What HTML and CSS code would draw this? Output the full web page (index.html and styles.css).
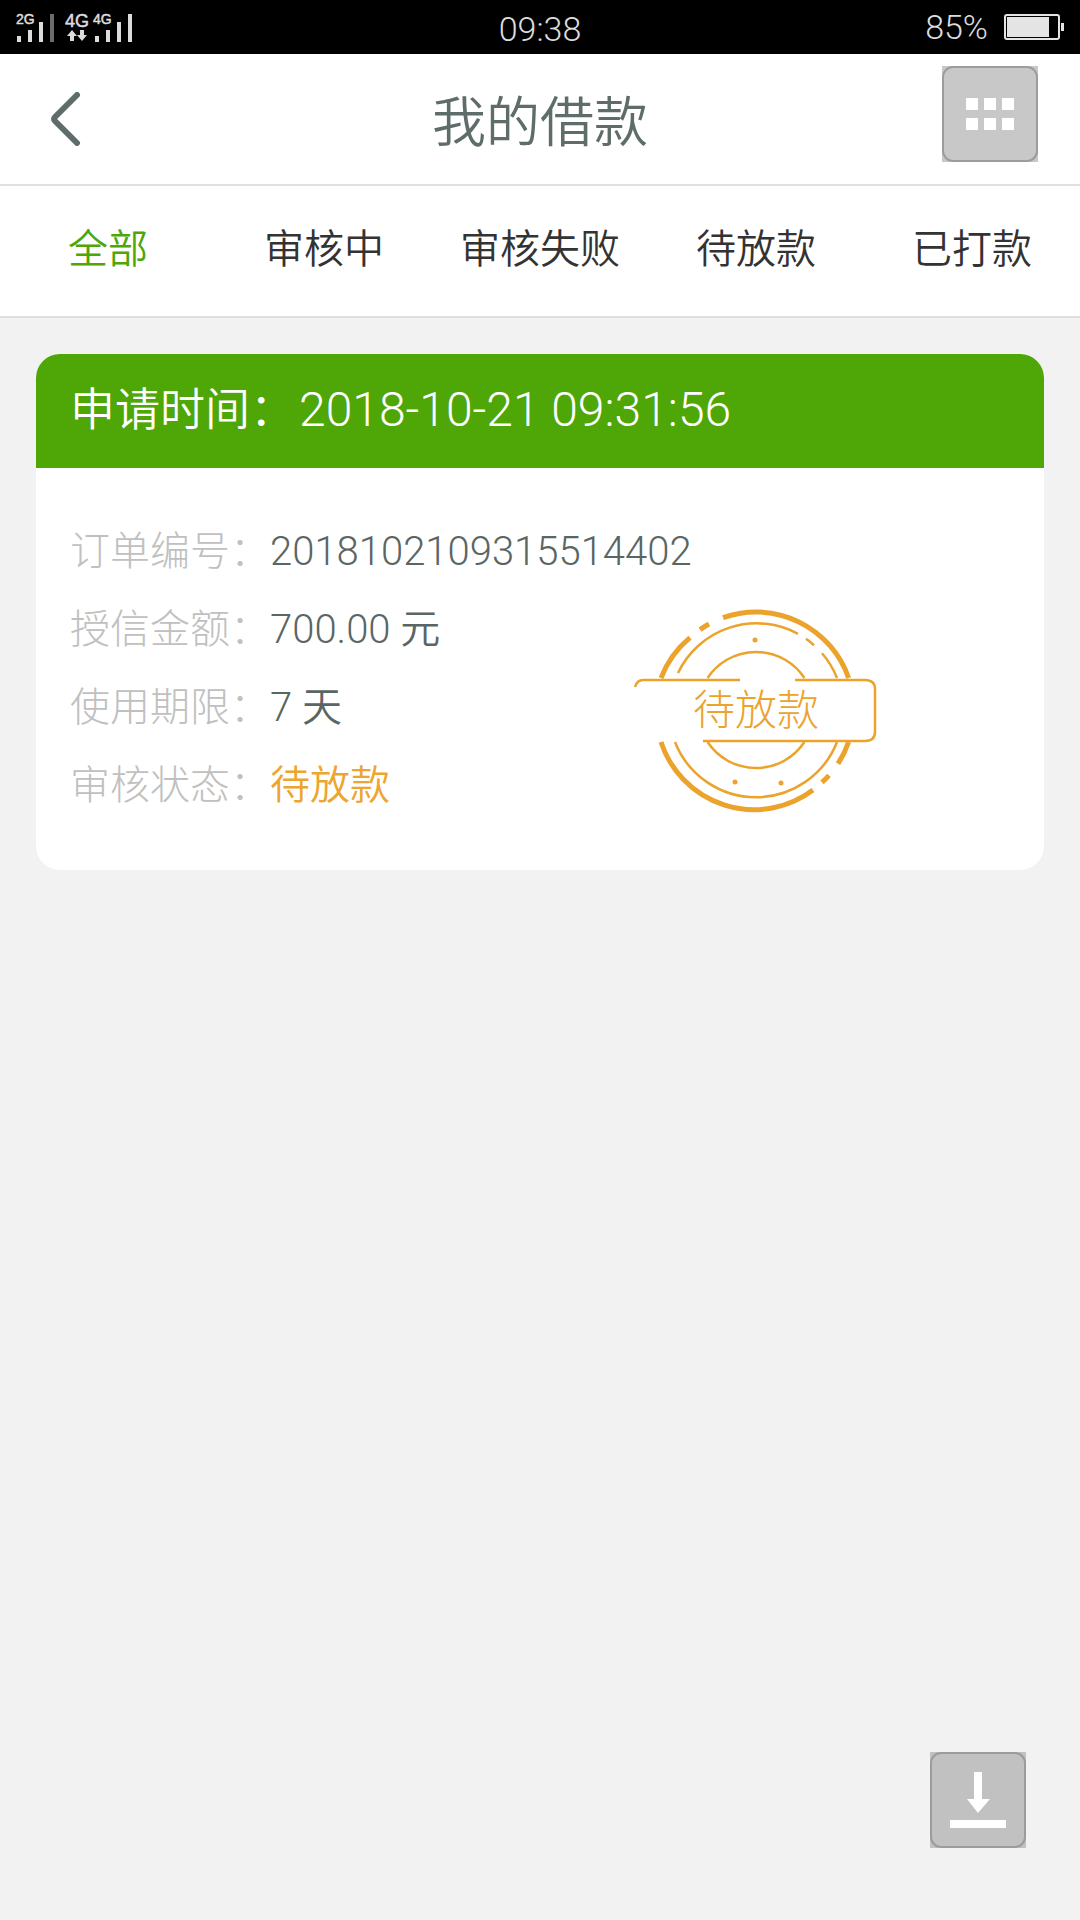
FILE: index.html
```html
<!DOCTYPE html>
<html lang="zh-CN">
<head>
<meta charset="utf-8">
<meta name="viewport" content="width=device-width">
<title>我的借款</title>
<link rel="stylesheet" href="styles.css">
</head>
<body>
<div class="status">
  <div class="signals">
    <svg width="120" height="32" viewBox="0 0 120 32" role="img" aria-label="信号">
      <g class="signal-text">
        <text x="0" y="13" font-size="14">2G</text>
        <text x="49" y="16" font-size="18">4G</text>
        <text x="77" y="13" font-size="14">4G</text>
      </g>
      <g fill="#dcdcdc">
        <path d="M1 25h4v6H1zM12 19h4v12h-4zM23 11h4v20h-4z"/>
        <path d="M34 3h4v28h-4z" fill="#6c6c6c"/>
        <path d="M79 25h4v6h-4zM90 19h4v12h-4zM101 11h4v20h-4zM112 3h4v28h-4z"/>
        <path d="M56 19l5 6h-3v5h-4v-5h-3zM66 30l-5-6h3v-5h4v5h3z"/>
      </g>
    </svg>
  </div>
  <time class="clock">09:38</time>
  <div class="power">
    <span>85%</span>
    <svg width="60" height="26" viewBox="0 0 60 26" role="img" aria-label="电量">
      <rect x="1" y="1" width="54" height="24" rx="2" fill="none" stroke="#e4e4e4" stroke-width="2"/>
      <path d="M3 3h42v20H3zM57 9h3v8h-3z" fill="#e4e4e4"/>
    </svg>
  </div>
</div>

<header class="bar">
  <button class="back" type="button" aria-label="返回">
    <svg width="32" height="54" viewBox="0 0 32 54"><path d="M27 3L5 25Q3 27 5 29L27 51" fill="none" stroke="#5f6d6a" stroke-width="6" stroke-linecap="round"/></svg>
  </button>
  <h1 class="title">我的借款</h1>
  <button class="tool" type="button" aria-label="菜单">
    <svg width="96" height="96" viewBox="0 0 96 96">
      <rect x="1" y="1" width="94" height="94" rx="10" fill="none" stroke="#9c9c9c" stroke-width="2"/>
      <path d="M24 32h12v12H24zM42 32h12v12H42zM60 32h12v12H60zM24 52h12v12H24zM42 52h12v12H42zM60 52h12v12H60z" fill="#fff"/>
    </svg>
  </button>
</header>

<nav class="tabs">
  <a class="tab tab-on" href="#all" aria-current="page">全部</a>
  <a class="tab" href="#review">审核中</a>
  <a class="tab" href="#failed">审核失败</a>
  <a class="tab" href="#pending">待放款</a>
  <a class="tab" href="#paid">已打款</a>
</nav>

<main class="list">
  <article class="card">
    <h2 class="card-head">申请时间：<time class="card-time">2018-10-21 09:31:56</time></h2>
    <div class="card-body">
      <dl class="facts">
        <div class="fact"><dt>订单编号：</dt><dd>2018102109315514402</dd></div>
        <div class="fact"><dt>授信金额：</dt><dd>700.00 元</dd></div>
        <div class="fact"><dt>使用期限：</dt><dd>7 天</dd></div>
        <div class="fact"><dt>审核状态：</dt><dd class="pending">待放款</dd></div>
      </dl>
      <svg class="seal" width="270" height="235" viewBox="0 0 270 235" role="img" aria-label="待放款">
        <g stroke-width="5">
          <path d="M41 88A98 98 0 0 1 70 47.6M80 39.6A98 98 0 0 1 89 34M103 27.7A98 98 0 0 1 228.6 88"/>
          <path d="M41 152A98 98 0 0 0 193 200M202 192.4A98 98 0 0 0 209 185.4M218 173.7A98 98 0 0 0 228.6 152"/>
        </g>
        <g stroke-width="2.5">
          <path d="M58 83A87 87 0 0 1 178 43.8M186 48.8A87 87 0 0 1 194 55.2M202 63.3A87 87 0 0 1 217 88M55 152A87 87 0 0 0 217 152"/>
          <path d="M87.6 88A58 58 0 0 1 184.4 88M87.6 152A58 58 0 0 0 184.4 152"/>
          <path d="M15 97Q17 90 23 90H120M175 90H245Q255 90 255 99V142Q255 151 245 151H83"/>
        </g>
        <g class="seal-dots"><circle cx="135" cy="50" r="2.5"/><circle cx="115" cy="192" r="2.5"/><circle cx="161" cy="193" r="2.5"/></g>
        <text x="136" y="135" text-anchor="middle">待放款</text>
      </svg>
    </div>
  </article>
</main>

<button class="tool download" type="button" aria-label="下载">
  <svg width="96" height="96" viewBox="0 0 96 96">
    <rect x="1" y="1" width="94" height="94" rx="10" fill="none" stroke="#9c9c9c" stroke-width="2"/>
    <path d="M44 20h8v27h8L48 61 37 47h7zM20 68h56v8H20z" fill="#fff"/>
  </svg>
</button>
</body>
</html>
```
FILE: styles.css
```css
* { box-sizing: border-box; }

body {
  margin: 0;
  min-height: 100vh;
  background: #f2f2f2;
  color: #333;
  font-family: Roboto, "Noto Sans CJK SC", sans-serif;
  font-size: 40px;
  font-weight: 350;
}

button {
  padding: 0;
  border: 0;
  background: none;
}

svg { display: block; }

.status {
  display: grid;
  grid-template-columns: 1fr auto 1fr;
  align-items: center;
  height: 54px;
  padding: 0 16px;
  background: #000;
  color: #dcdcdc;
  font-size: 34px;
  font-weight: 300;
  line-height: 54px;
}

.signal-text {
  fill: #dcdcdc;
  font-family: "Liberation Sans", sans-serif;
  font-weight: 400;
  stroke: #dcdcdc;
  stroke-width: 0.5px;
}

.clock { padding-top: 4px; line-height: 50px; }

.power {
  display: flex;
  align-items: center;
  justify-content: flex-end;
  gap: 16px;
}

.bar {
  display: grid;
  grid-template-columns: 1fr auto 1fr;
  align-items: center;
  height: 132px;
  padding: 0 42px;
  border-bottom: 2px solid #e0e0e0;
  background: #fff;
}

.back {
  justify-self: start;
  padding: 0 8px;
}

.title {
  margin: 0;
  padding-top: 10px;
  color: #5f6d6a;
  font-size: 54px;
  font-weight: 350;
  line-height: 80px;
}

.tool {
  width: 96px;
  height: 96px;
  background: #c8c8c8;
}

.bar .tool {
  align-self: start;
  justify-self: end;
  margin-top: 12px;
}

.tabs {
  display: grid;
  grid-template-columns: repeat(5, 1fr);
  height: 132px;
  border-bottom: 2px solid #dedede;
  background: #fff;
}

.tab {
  color: #333;
  line-height: 128px;
  text-align: center;
  text-decoration: none;
}

.tab-on { color: #4ea607; }

.list { padding: 36px; }

.card {
  overflow: hidden;
  border-radius: 24px;
  background: #fff;
}

.card-head {
  margin: 0;
  padding: 0 34px;
  background: #4ea607;
  color: #fff;
  font-size: 45px;
  font-weight: 350;
  line-height: 114px;
}

.card-time {
  margin-left: 4px;
  font-size: 48px;
  font-weight: 300;
  line-height: 48px;
}

.card-body {
  display: flex;
  align-items: flex-end;
  justify-content: space-between;
  padding: 45px 154px 45px 34px;
}

.facts { margin: 0; }

.fact {
  display: flex;
  line-height: 78px;
}

.fact dt {
  color: #c0c0c0;
  font-weight: 300;
}

.fact dd {
  margin: 0;
  color: #5a6664;
}

.fact .pending { color: #eda52e; }

.seal {
  flex: none;
  margin-left: -76px;
  fill: none;
  stroke: #eba32b;
}

.seal text {
  fill: #eba32b;
  stroke: none;
  font-size: 42px;
  font-weight: 300;
}

.seal-dots {
  fill: #eba32b;
  stroke: none;
}

.download {
  position: fixed;
  right: 54px;
  bottom: 72px;
  background: #c1c1c1;
}
```
